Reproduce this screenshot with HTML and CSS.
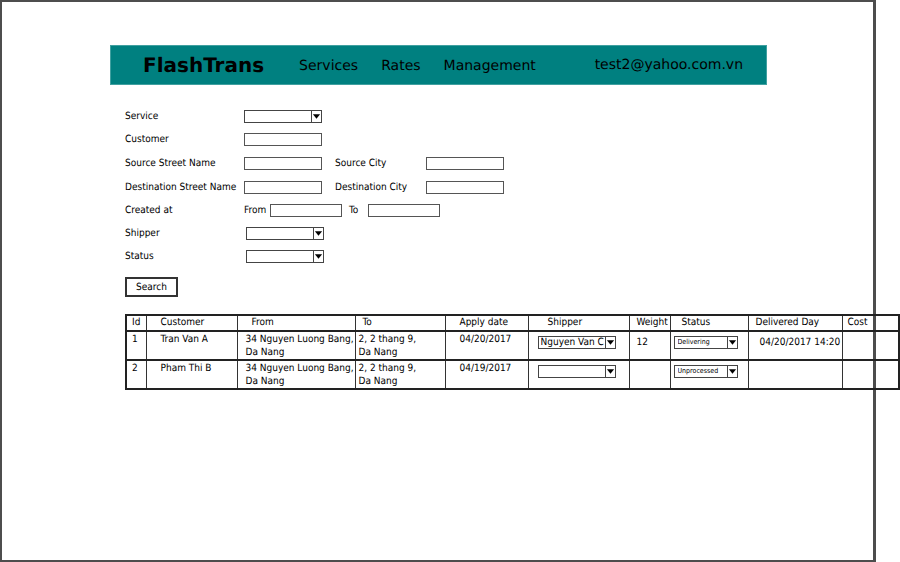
FILE: index.html
```html
<!DOCTYPE html>
<html lang="en">
<head>
<meta charset="utf-8">
<title>FlashTrans</title>
<link rel="stylesheet" href="styles.css">
</head>
<body>
<div class="frame">
  <header class="bar">
    <a class="brand" href="#">FlashTrans</a>
    <nav class="nav">
      <a href="#">Services</a>
      <a href="#">Rates</a>
      <a href="#">Management</a>
    </nav>
    <a class="account" href="#">test2@yahoo.com.vn</a>
  </header>

  <form class="filters">
    <div class="row">
      <label class="name" for="service">Service</label>
      <span class="pick"><select id="service"><option></option></select><svg viewBox="0 0 10 11"><path d="M1 3h8L5 8z"/></svg></span>
    </div>
    <div class="row">
      <label class="name" for="customer">Customer</label>
      <input class="field" id="customer" type="text">
    </div>
    <div class="row address">
      <label class="name" for="src-street">Source Street Name</label>
      <input class="field" id="src-street" type="text">
      <label class="city" for="src-city">Source City</label>
      <input class="field" id="src-city" type="text">
    </div>
    <div class="row address">
      <label class="name" for="dst-street">Destination Street Name</label>
      <input class="field" id="dst-street" type="text">
      <label class="city" for="dst-city">Destination City</label>
      <input class="field" id="dst-city" type="text">
    </div>
    <div class="row">
      <span class="name">Created at</span>
      <label class="from" for="from">From</label>
      <input class="field date" id="from" type="text">
      <label class="to" for="to">To</label>
      <input class="field date" id="to" type="text">
    </div>
    <div class="row wide">
      <label class="name" for="shipper">Shipper</label>
      <span class="pick"><select id="shipper"><option></option></select><svg viewBox="0 0 10 11"><path d="M1 3h8L5 8z"/></svg></span>
    </div>
    <div class="row wide">
      <label class="name" for="status">Status</label>
      <span class="pick"><select id="status"><option></option></select><svg viewBox="0 0 10 11"><path d="M1 3h8L5 8z"/></svg></span>
    </div>
    <button class="search" type="button">Search</button>
  </form>

  <div class="orders">
    <table>
      <colgroup>
        <col class="c-id"><col class="c-customer"><col class="c-from"><col class="c-to"><col class="c-date">
        <col class="c-shipper"><col class="c-weight"><col class="c-status"><col class="c-day"><col>
      </colgroup>
      <thead>
        <tr>
          <th class="first">Id</th><th>Customer</th><th>From</th><th class="tight">To</th><th>Apply date</th>
          <th class="deep">Shipper</th><th class="tight">Weight</th><th class="mid">Status</th><th class="tight">Delivered Day</th><th class="first">Cost</th>
        </tr>
      </thead>
      <tbody>
        <tr>
          <td class="first">1</td>
          <td>Tran Van A</td>
          <td class="street">34 Nguyen Luong Bang,<br>Da Nang</td>
          <td class="dest">2, 2 thang 9,<br>Da Nang</td>
          <td>04/20/2017</td>
          <td class="choice shipper"><span class="pick"><select aria-label="Shipper of order 1"><option>Nguyen Van C</option></select><svg viewBox="0 0 10 11"><path d="M1 3h8L5 8z"/></svg></span></td>
          <td class="tight low">12</td>
          <td class="choice"><span class="pick small"><select aria-label="Status of order 1"><option>Delivering</option></select><svg viewBox="0 0 10 11"><path d="M1 3h8L5 8z"/></svg></span></td>
          <td class="mid low">04/20/2017 14:20</td>
          <td></td>
        </tr>
        <tr>
          <td class="first">2</td>
          <td>Pham Thi B</td>
          <td class="street">34 Nguyen Luong Bang,<br>Da Nang</td>
          <td class="dest">2, 2 thang 9,<br>Da Nang</td>
          <td>04/19/2017</td>
          <td class="choice shipper"><span class="pick"><select aria-label="Shipper of order 2"><option></option></select><svg viewBox="0 0 10 11"><path d="M1 3h8L5 8z"/></svg></span></td>
          <td></td>
          <td class="choice"><span class="pick small"><select aria-label="Status of order 2"><option>Unprocessed</option></select><svg viewBox="0 0 10 11"><path d="M1 3h8L5 8z"/></svg></span></td>
          <td></td>
          <td></td>
        </tr>
      </tbody>
    </table>
  </div>
</div>
</body>
</html>
```
FILE: styles.css
```css
* { box-sizing: border-box; }

body {
  margin: 0;
  background: #fff;
  color: #000;
  font: 10px/13px "DejaVu Sans Condensed", "DejaVu Sans", sans-serif;
  text-rendering: geometricPrecision;
}

a { color: inherit; text-decoration: none; }

.frame {
  min-height: 100vh;
  margin-right: 24px;
  padding: 43px 106px 0 108px;
  border: 2px solid #4d4d4d;
  border-right-width: 3px;
}

.bar {
  display: flex;
  align-items: center;
  height: 40px;
  padding: 0 23px 0 32px;
  border: 1px solid #40a0a0;
  background: #008080;
  font: 14px/20px "DejaVu Sans", sans-serif;
}

.brand { font-size: 20px; font-weight: bold; }
.nav { display: flex; gap: 23px; margin-left: 35px; padding-top: 2px; }
.account { margin-left: auto; }

.filters { padding: 20px 0 0 15px; }
.row { display: flex; align-items: center; height: 23px; }
.row.address { height: 24px; }
.name { width: 119px; }
.wide .name { width: 121px; }
.city { width: 91px; margin-left: 13px; }
.from { width: 26px; }
.to { width: 19px; margin-left: 7px; }

.field {
  width: 78px;
  height: 13px;
  padding: 0 2px;
  border: 1px solid #555;
  background: #fff;
  font: inherit;
}
.field.date { width: 72px; }

.pick {
  position: relative;
  display: block;
  width: 78px;
  height: 13px;
}
.pick select {
  appearance: none;
  display: block;
  width: 100%;
  height: 100%;
  padding: 0 11px 0 2px;
  border: 1px solid #444;
  border-radius: 0;
  background: #fff;
  color: #000;
  font: inherit;
  line-height: 11px;
  text-rendering: inherit;
}
.pick svg {
  position: absolute;
  top: 1px;
  right: 1px;
  width: 10px;
  height: 11px;
  border-left: 1px solid #444;
  pointer-events: none;
}
.pick.small { width: 64px; font-size: 7px; }
.pick.small select { padding-left: 3px; }

.search {
  display: block;
  width: 53px;
  height: 20px;
  margin-top: 9px;
  padding: 0;
  border: 2px solid #333;
  background: #fff;
  color: #000;
  font: inherit;
  text-rendering: inherit;
}

.orders { margin: 17px -133px 0 15px; }

table {
  width: 100%;
  table-layout: fixed;
  border-collapse: collapse;
  border: 2px solid #222;
}
tr { border-bottom: 2px solid #222; }
th, td {
  height: 29px;
  padding: 1px 0 0 14px;
  border-left: 1px solid #333;
  font-weight: normal;
  text-align: left;
  vertical-align: top;
  white-space: nowrap;
}
th { height: 16px; padding-top: 0; }
.first { padding-left: 5px; }
.tight { padding-left: 7px; }
.mid { padding-left: 11px; }
.deep { padding-left: 19px; }
.street { padding-left: 8px; }
.dest { padding-left: 3px; }
.low { padding-top: 4px; }
.choice { padding: 4px 0 0 3px; }
.choice.shipper { padding-left: 9px; }

.c-id { width: 20px; }
.c-customer { width: 91px; }
.c-from { width: 118px; }
.c-to { width: 90px; }
.c-date { width: 83px; }
.c-shipper { width: 101px; }
.c-weight { width: 41px; }
.c-status { width: 78px; }
.c-day { width: 94px; }
```
